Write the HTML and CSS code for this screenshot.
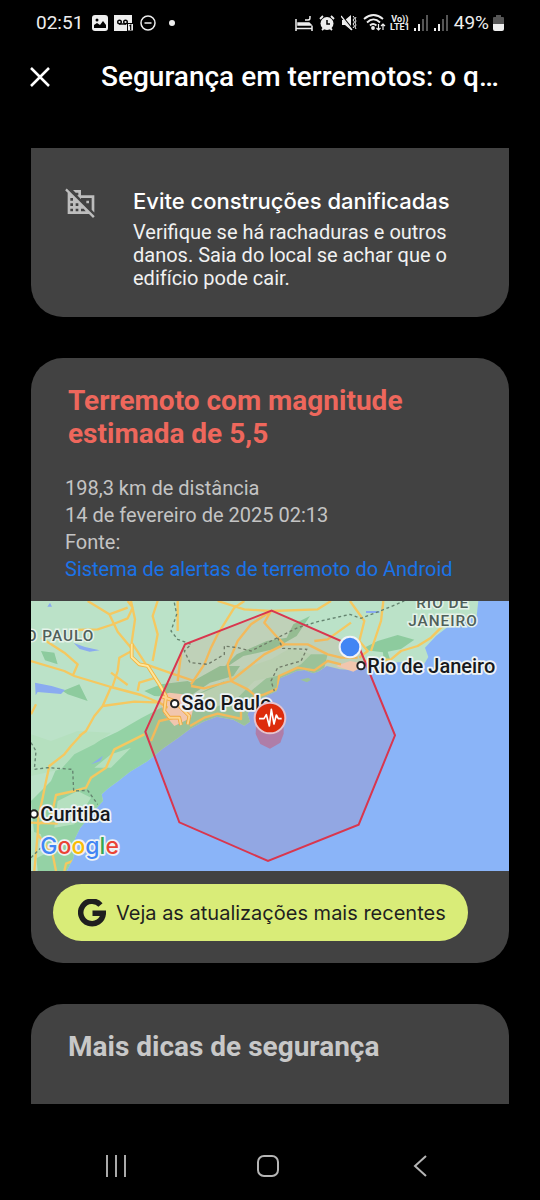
FILE: index.html
```html
<!DOCTYPE html>
<html lang="pt-BR">
<head>
<meta charset="utf-8">
<meta name="viewport" content="width=device-width, initial-scale=1">
<title>Segurança em terremotos</title>
<link rel="stylesheet" href="styles.css">
</head>
<body>
<div class="screen">
  <div class="status">
    <div class="status-group">
      <span class="clock">02:51</span>
      <svg width="16" height="16" viewBox="0 0 16 16"><rect width="16" height="16" rx="3" fill="#eee"/><circle cx="5" cy="5" r="1.5" fill="#000"/><path d="M2 13v-3l3-2 3 2 3-4 3 4v3z" fill="#000"/></svg>
      <svg width="20" height="16" viewBox="0 0 20 16"><path d="M0 0h18v16H0z" fill="#eee"/><g fill="none" stroke="#000" stroke-width="1.4"><circle cx="5.500" cy="7" r="1.800"/><circle cx="11.500" cy="7" r="1.800"/><path d="M5 9h7"/></g><rect x="13.500" y="8.500" width="6" height="7.500" fill="#eee" stroke="#000"/><path d="M15.500 11l1.200-.8V15" fill="none" stroke="#000" stroke-width="1.200"/></svg>
      <svg width="16" height="16" viewBox="0 0 16 16" fill="none" stroke="#eee" stroke-width="1.500"><circle cx="8" cy="8" r="7"/><path d="M4.500 8h7"/></svg>
      <span class="more-dot"></span>
    </div>
    <div class="status-group status-right">
      <svg width="18" height="16" viewBox="0 0 18 16" fill="none" stroke="#eee" stroke-width="1.500"><path d="M1 4v12M1 13.500h16M17 11v5"/><path d="M3 8h11l2 2H3z" fill="#eee"/><path d="M10 5h3c2 0 2-1 2-4"/></svg>
      <svg width="16" height="16" viewBox="0 0 16 16"><circle cx="8" cy="8.500" r="6.500" fill="#eee"/><path d="M1 4l3-3M15 4l-3-3M3 15l2-2M13 15l-2-2" stroke="#eee" stroke-width="1.800"/><path d="M8 5v4h3" fill="none" stroke="#000" stroke-width="1.500"/></svg>
      <svg width="16" height="16" viewBox="0 0 16 16"><path d="M1 5h3l6-5v15L4 10H1z" fill="#eee"/><path d="M0 0l12 15" stroke="#000" stroke-width="2"/><path d="M0 1l11 14" stroke="#eee" stroke-width="1.300"/><path d="M12 1l1.500 2L12 5l1.500 2L12 9l1.500 2L12 13M15 2l-1 2 1 2-1 2 1 2-1 2 1 2" fill="none" stroke="#eee"/></svg>
      <svg width="23" height="17" viewBox="0 0 23 17" fill="none" stroke="#eee" stroke-width="1.800"><path d="M1 5c6-5 13-5 19 0M4 8.500c4-4 9-4 13 0M7 11.500c2-2 4-2 6.500 0"/><circle cx="10" cy="14" r="1" fill="#eee"/><path d="M15.500 10v6m-2-2 2 2 2-2M20 16v-6m-2 2 2-2 2 2" stroke-width="1.200"/></svg>
      <span class="lte"><span>Vo))</span><span>LTE1</span></span>
      <svg width="14" height="16" viewBox="0 0 14 16"><path d="M0 13h2v3H0zM4 9h2v7H4z" fill="#eee"/><path d="M8 4h2v12H8zM12 0h2v16h-2z" fill="#555"/></svg>
      <svg width="14" height="16" viewBox="0 0 14 16"><path d="M0 13h2v3H0zM4 9h2v7H4z" fill="#eee"/><path d="M8 4h2v12H8zM12 0h2v16h-2z" fill="#555"/></svg>
      <span class="battery-text">49%</span>
      <svg width="11" height="16" viewBox="0 0 11 16"><path d="M3 0h5v2h2q1 0 1 1v7H0V3q0-1 1-1h2z" fill="#555"/><path d="M0 9h11v5q0 2-2 2H2q-2 0-2-2z" fill="#eee"/></svg>
    </div>
  </div>

  <header class="appbar">
    <button class="close" type="button" aria-label="Fechar"><svg width="20" height="20" viewBox="0 0 20 20" fill="none" stroke="#fff" stroke-width="2.500"><path d="M1 1l18 18M19 1L1 19"/></svg></button>
    <h1 class="title">Segurança em terremotos: o q…</h1>
  </header>

  <main class="content">
    <section class="card card-top">
      <svg class="tip-icon" width="32" height="32" viewBox="0 0 24 24" fill="#bdbdbd" fill-rule="evenodd"><path d="M6 3h6v4h10v12.900l-2-2V9h-8v.900L9.100 7H10V5H8zM16 11h2v2h-2z"/><path d="M1.300 1.800L.1 3.100 2 5v16h16l3 3 1.300-1.300zM4 9h2v2H4zM4 13h2v2H4zM4 17h2v2H4zM8 13h2v2H8zM8 17h2v2H8zM12 17h2l1.500 2H12z"/></svg>
      <div class="tip">
        <h2 class="tip-title">Evite construções danificadas</h2>
        <p class="tip-text">Verifique se há rachaduras e outros danos. Saia do local se achar que o edifício pode cair.</p>
      </div>
    </section>

    <section class="card">
      <div class="quake">
        <h2 class="heading alert">Terremoto com magnitude estimada de 5,5</h2>
        <div class="facts">
          <p>198,3 km de distância</p>
          <p>14 de fevereiro de 2025 02:13</p>
          <p>Fonte:</p>
          <a class="source" href="#">Sistema de alertas de terremoto do Android</a>
        </div>
      </div>
      <svg class="map" viewBox="0 0 1434 810" role="img" aria-label="Mapa do terremoto">
        <defs>
          <path id="land" d="M0 0H1342L1337 45 1270 50 1247 80 1215 105 1182 140 1192 168 1180 188 1130 182 1077 185 1020 195 957 207 927 205 887 195 865 210 847 217 820 207 797 210 770 222 747 232 737 270 700 288 667 300 650 340 657 362 640 374 607 356 557 347 517 362 477 384 440 412 397 442 347 482 297 512 262 540 232 562 212 580 216 600 187 632 147 682 132 712 127 772 107 810H0z"/>
          <clipPath id="land-clip"><use href="#land"/></clipPath>
        </defs>
        <rect width="1434" height="810" fill="#8ab4f8"/>
        <use href="#land" fill="#bbe2c8"/>
        <g clip-path="url(#land-clip)">
          <path d="M0 600L60 540 90 470 180 430 260 392 330 352 390 320 477 290 580 240 660 270 720 220 790 160 890 160 880 200 700 320 640 380 477 420 300 540 160 700 140 810H20z" fill="#94d2a5"/>
          <path d="M0 400l60 20 80-30 100 5-50 35-60 30-40 45-90 20zM190 500l50-40 60-20-60 60zM80 600l60-30 40 20-50 80-60 10zM0 690l30 10 10 60-40 20zM480 290l80-35 70-50 90-30 60-35 60 20-30 30-50 30-90 20-50 50-70 30-60 5z" fill="#b5e0bf"/>
          <path d="M477 245l90-50 60 0-20 30-70 20-60 40zM577 200l40-40 90-40 60-10 20-40 50-25-40 60-70 40-90 20-60 40zM340 270l50-20 80-10 40 20-60 30-80-5zM1000 140l40-20 60-18 50 14-40 28-40 8 8 26-20 6-2-30-50-6zM30 150l40 5 10 35-38-12zM95 270l50-20 25 50-60-20z" fill="#8dcb9e"/>
          <path d="M12 245l50 10 40 12-12 12-70-6-6 10zM128 126l34 12 44 10-30 4-30-8zM57 5l6 12h-14zM1005 30h40v6h-40zM180 490l36-26-8 16z" fill="#8aabf0"/>
        </g>
        <path d="M808 236l24-6 8 6-12 8z" fill="#94d2a5"/>
        <path d="M385 285l30-10 40 5 35 30-10 40-50 25-30-35z" fill="#f3d6bd"/>
        <path d="M915 195l42-15 50 10-40 22z" fill="#f3d6bd"/>
        <g class="roads" clip-path="url(#land-clip)">
          <path d="M0 180L100 210 130 225 240 258 330 282 387 306 410 320M240 258L215 315 190 345 165 390 145 405M215 315L310 302 390 305M125 225L140 190 100 155 30 110M130 87L200 85 240 72 290 52 305 20 290 0M170 0L235 40 290 20M235 40L260 92 300 140M300 0L312 55 302 125 345 190M380 0L365 45 380 100 365 180M302 150L265 170 260 210 245 255M240 215L290 252M345 190L430 220 490 240M320 270L325 245 375 230M440 90L440 0M450 160L440 240"/>
          <path d="M480 250L520 190 540 140 560 100 610 20 640 0M560 0L640 25 720 30 860 25 900 0M720 30L700 65 740 110 760 130M600 240L590 190 620 120 660 70 720 30M480 255L520 262 600 240 700 160 760 130 830 130 890 160 930 170 980 170M850 120L890 115 960 65M600 240L650 265 680 290M957 0L1000 60 985 120 1010 150 985 170M1020 150L1050 60 1057 0M1000 180L1080 175 1110 150 1160 135 1200 110 1240 70 1260 40"/>
          <path d="M665 290L700 280 740 262 744 225 800 200 850 208 890 180 930 190M477 375L520 350 560 338 615 350 630 354 630 310"/>
          <path d="M150 402L120 435 100 460 55 495 42 555 35 590 22 650 20 700 65 760 75 810M340 400L250 445 225 500 180 530 165 560 130 570 75 582 60 650 20 670M0 665L80 668M20 700L10 810M130 778L105 788 100 810M360 420L385 360 430 350M0 340l15-30"/>
        </g>
        <g fill="none" stroke-linejoin="round"><path id="highway" d="M302 128V168L325 190 350 195 385 250 405 285 400 330 415 350 445 350 450 372M390 285L430 300 475 345 470 370" stroke="#f2b33d" stroke-width="11"/><path d="M302 128V168L325 190 350 195 385 250 405 285 400 330 415 350 445 350 450 372M390 285L430 300 475 345 470 370" stroke="#ffe69a" stroke-width="6"/></g>
        <path class="border" d="M430 5L437 40 420 90 440 115 480 130 460 150 477 185 530 190 580 160 580 135 620 140 660 150 740 110 800 80 860 62 957 40 990 52 1060 25 1120 0M740 110L755 142 827 145 810 180 740 200 720 240 730 270M0 425L15 450 10 505 50 500 125 505 128 570 170 568 200 610M0 770l30-30"/>
        <polygon points="722,29 987,145 1092,403 983,671 711,780 445,664 343,392 462,130" fill="#e53935" fill-opacity=".1" stroke="#d9364e" stroke-width="6"/>
        <polygon points="717,320 757,335 758,398 748,425 717,443 688,429 674,399 677,335" fill="#c65b78" fill-opacity=".55"/>
        <g class="region-label"><text x="190" y="119" text-anchor="end">O PAULO</text><text x="1235" y="20" text-anchor="middle">RIO DE</text><text x="1236" y="74" text-anchor="middle">JANEIRO</text></g>
        <g class="city-dot"><circle cx="431" cy="308" r="11"/><circle cx="990" cy="194" r="11"/><circle cx="9" cy="639" r="11"/></g>
        <g class="city-label"><text x="451" y="328">São Paulo</text><text x="1009" y="215">Rio de Janeiro</text><text x="28" y="660">Curitiba</text></g>
        <circle cx="957" cy="138" r="31" fill="#4285f4" stroke="#f1f3f8" stroke-width="6"/>
        <circle cx="717" cy="351" r="46" fill="#dd2c0c" stroke="#e5c3ce" stroke-width="6"/>
        <path d="M684 353h15l7-12 9 34 6-50 8 44 7-27 6 11h10" fill="none" stroke="#fff" stroke-width="5" stroke-linejoin="round"/>
        <text class="google" x="28" y="760"><tspan fill="#4285f4">G</tspan><tspan fill="#ea4335">o</tspan><tspan fill="#fbbc05">o</tspan><tspan fill="#4285f4">g</tspan><tspan fill="#34a853">l</tspan><tspan fill="#ea4335">e</tspan></text>
      </svg>
      <div class="actions">
        <button class="updates" type="button">
          <svg width="28" height="28" viewBox="0 0 28 28" fill="none" stroke="#1f1f1f" stroke-width="5.500"><path d="M22.500 6A11.300 11.300 0 1 0 25.300 14.200H14.500"/></svg>
          <span>Veja as atualizações mais recentes</span>
        </button>
      </div>
    </section>

    <section class="card card-bottom">
      <h2 class="heading">Mais dicas de segurança</h2>
    </section>
  </main>

  <nav class="navbar">
    <button type="button" aria-label="Recentes"><svg width="22" height="22" viewBox="0 0 22 22" stroke="#aaa" stroke-width="2"><path d="M2 0v22M11 0v22M20 0v22"/></svg></button>
    <button type="button" aria-label="Início"><svg width="22" height="22" viewBox="0 0 22 22" fill="none" stroke="#b5b5b5" stroke-width="2"><rect x="1" y="1" width="20" height="20" rx="6"/></svg></button>
    <button type="button" aria-label="Voltar"><svg width="22" height="22" viewBox="0 0 22 22" fill="none" stroke="#b5b5b5" stroke-width="2"><path d="M17 1L6 11l11 10"/></svg></button>
  </nav>
</div>
</body>
</html>
```
FILE: styles.css
```css
* { box-sizing: border-box; }
body, h1, h2, p { margin: 0; }
body { background: #000; color: #fff; font-family: Roboto, "Liberation Sans", sans-serif; }
svg { display: block; flex: none; }
button { border: 0; padding: 0; background: none; color: inherit; font: inherit; }
.screen { display: flex; flex-direction: column; height: 100vh; }

.status { display: flex; justify-content: space-between; align-items: center; padding: 10px 36px; height: 45px; color: #eee; font-size: 19px; }
.status-group { display: flex; align-items: center; gap: 6px; }
.clock { margin-right: 3px; }
.more-dot { width: 6px; height: 6px; margin-left: 7px; border-radius: 50%; background: #eee; }
.lte { display: flex; flex-direction: column; align-items: center; margin: 0 -2px; font-size: 9px; line-height: 8px; font-weight: 700; }
.battery-text { margin-right: -2px; }

.appbar { display: flex; align-items: center; gap: 51px; height: 64px; padding: 0 30px; }
.title { font-size: 28px; line-height: 36px; font-weight: 500; white-space: nowrap; }

.content { flex: 1; min-height: 0; margin-top: 39px; padding: 0 31px; overflow: hidden; display: flex; flex-direction: column; gap: 41px; }
.card { flex: none; background: #424242; border-radius: 32px; }
.card-top { display: flex; gap: 36px; padding: 38px 36px 27px 34px; border-radius: 0 0 32px 32px; }
.tip-title { font: 500 22px/30px Inter, sans-serif; margin-bottom: 5px; white-space: nowrap; }
.tip-text { font-size: 20px; line-height: 23px; color: #f1f1f1; }

.quake { padding: 26px 34px 18px; }
.heading { padding: 0 3px; font-size: 28px; line-height: 33px; font-weight: 700; color: #c8c8c8; }
.alert { color: #ee675c; }
.facts { margin-top: 25px; font-size: 20px; line-height: 27px; color: #c4c4c4; }
.source { display: block; color: #1a73e8; text-decoration: none; }
.map { width: 100%; height: auto; }
.actions { padding: 13px 22px 22px; }
.updates { display: flex; align-items: center; gap: 10px; height: 57px; padding: 0 22px 0 25px; border-radius: 29px; background: #d9ec78; color: #1f1f1f; font: 400 20px/24px Inter, sans-serif; white-space: nowrap; }
.card-bottom { padding: 26px 34px 80px; }

.roads { fill: none; stroke: #f5c860; stroke-width: 7; stroke-linejoin: round; }
.border { fill: none; stroke: #64836f; stroke-width: 4; stroke-dasharray: 9 8; }
.region-label { font: 500 46px Roboto, sans-serif; letter-spacing: 3px; fill: #50605a; stroke: #e6f3ea; stroke-width: 9; paint-order: stroke; }
.city-label { font: 500 60px Roboto, sans-serif; fill: #17191c; stroke: #eef3f5; stroke-width: 11; stroke-linejoin: round; paint-order: stroke; }
.city-dot { fill: #fff; stroke: #222; stroke-width: 6; }
.google { font: 500 69px Inter, sans-serif; stroke: #eef3f5; stroke-width: 10; stroke-linejoin: round; paint-order: stroke; }

.navbar { display: flex; justify-content: space-around; align-items: center; height: 96px; padding: 27px 44px 0 40px; }
.navbar button { display: grid; place-items: center; flex: 1; height: 44px; }
```
